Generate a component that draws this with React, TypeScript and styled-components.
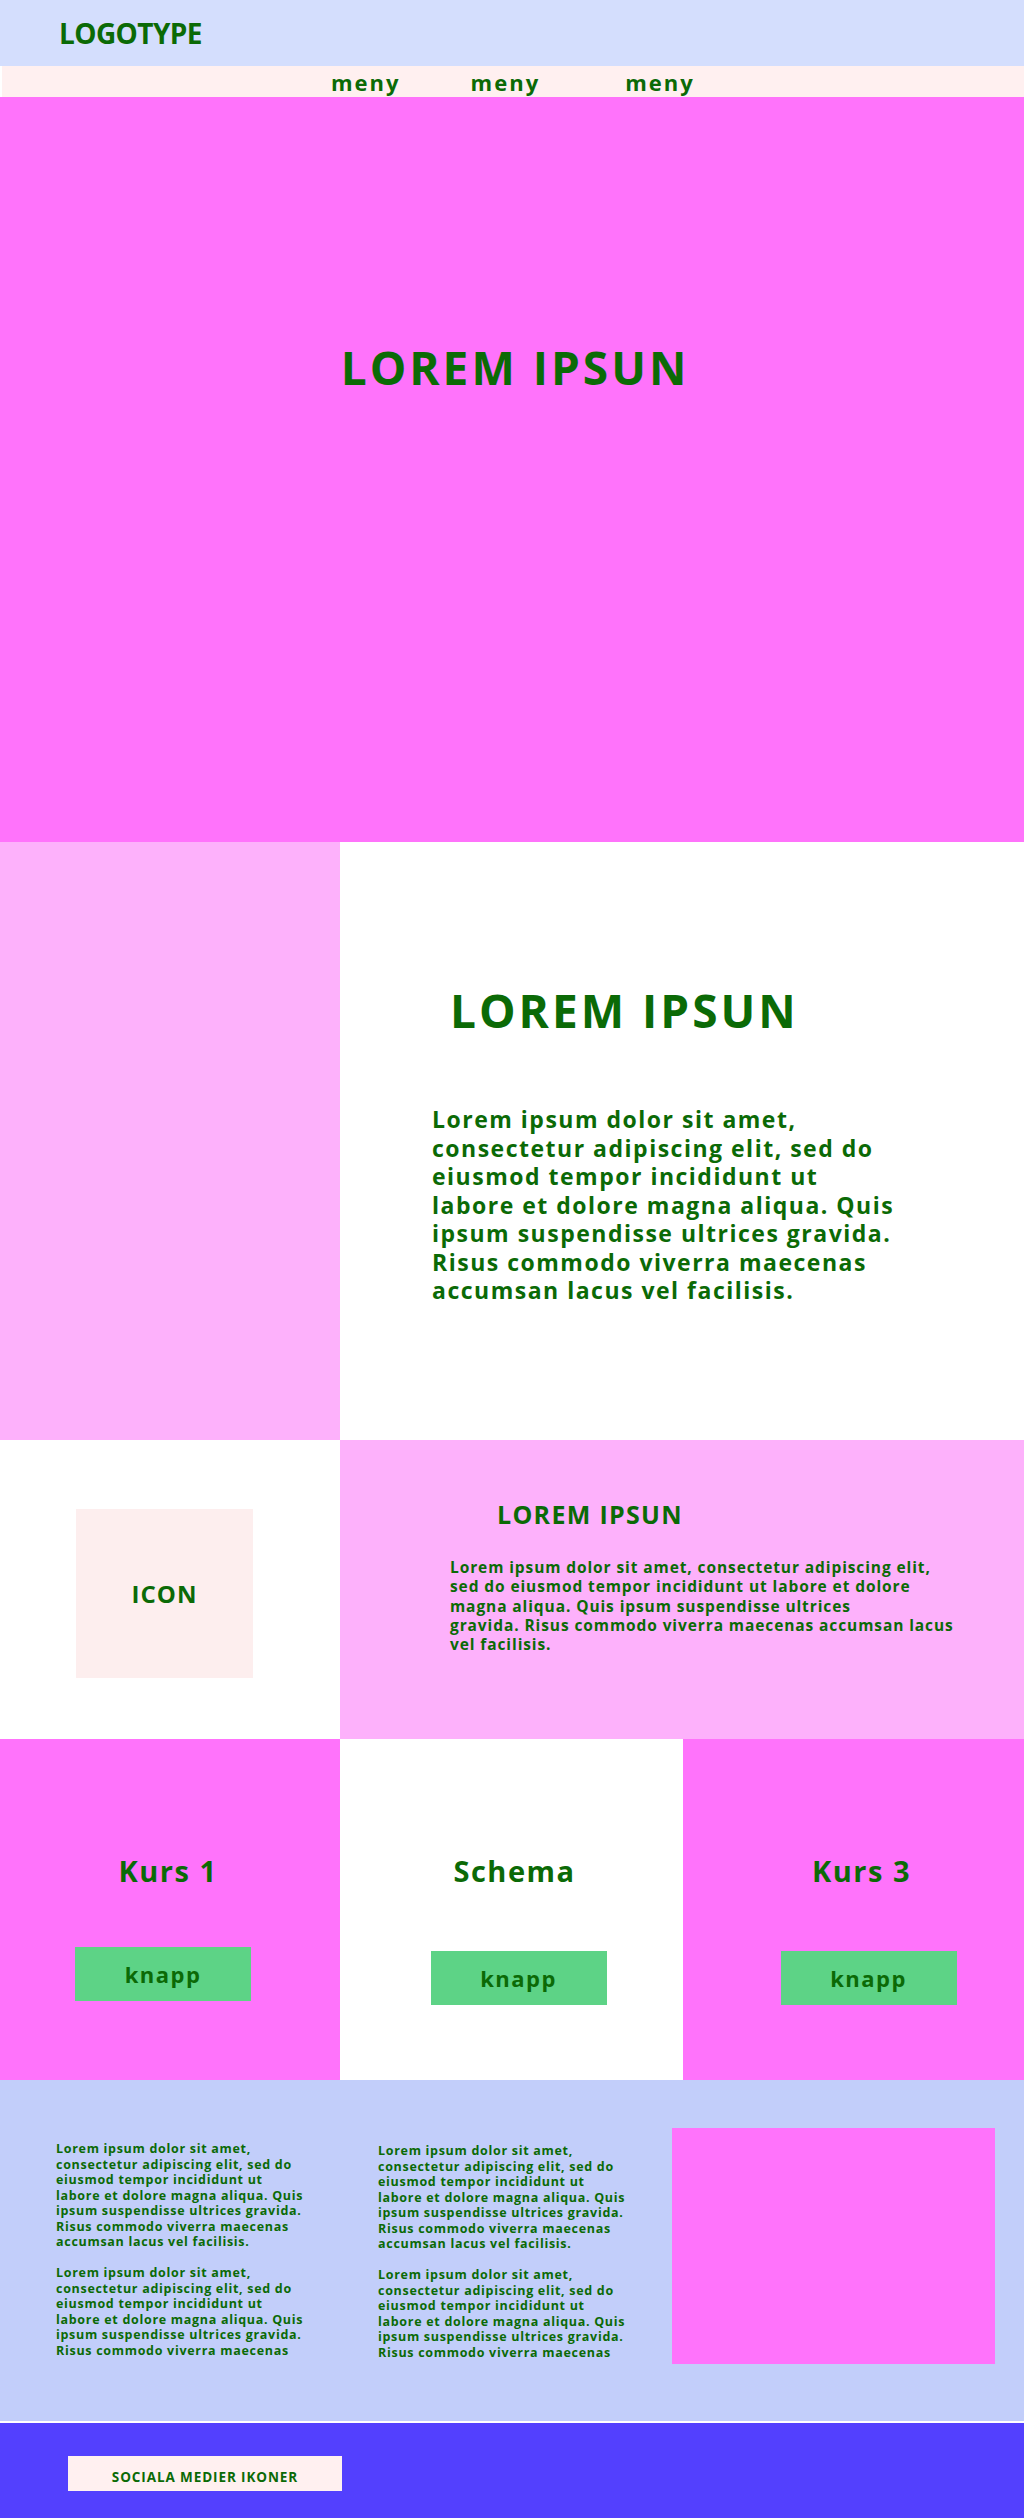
import React from "react";
import styled, { createGlobalStyle } from "styled-components";

const GlobalStyle = createGlobalStyle`
  body {
    margin: 0;
    font-family: "Open Sans", "Liberation Sans", sans-serif;
    color: #0b6a06;
  }
`;

const loremLines = [
  "Lorem ipsum dolor sit amet,",
  "consectetur adipiscing elit, sed do",
  "eiusmod tempor incididunt ut",
  "labore et dolore magna aliqua. Quis",
  "ipsum suspendisse ultrices gravida.",
  "Risus commodo viverra maecenas",
  "accumsan lacus vel facilisis.",
];

// the second block in the info columns stops one line short
const loremCut = loremLines.slice(0, 6);

const featureLines = [
  "Lorem ipsum dolor sit amet, consectetur adipiscing elit,",
  "sed do eiusmod tempor incididunt ut labore et dolore",
  "magna aliqua. Quis ipsum suspendisse ultrices",
  "gravida. Risus commodo viverra maecenas accumsan lacus",
  "vel facilisis.",
];

const menus = [
  { label: "meny", offset: 0 },
  { label: "meny", offset: 0 },
  { label: "meny", offset: 15 },
];

const courses = [
  { title: "Kurs 1", tone: "#ff73fb", titleShift: -2, btnShift: -7, btnTop: 0 },
  { title: "Schema", tone: "#ffffff", titleShift: 3, btnShift: 7, btnTop: 4 },
  { title: "Kurs 3", tone: "#ff73fb", titleShift: 8, btnShift: 15, btnTop: 4 },
];

function Lines({ lines }: { lines: string[] }) {
  return (
    <>
      {lines.map((line, i) => (
        <React.Fragment key={i}>
          {line}
          {i < lines.length - 1 && <br />}
        </React.Fragment>
      ))}
    </>
  );
}

export default function App() {
  return (
    <>
      <GlobalStyle />
      <Page>
        <Header>
          <Logo>LOGOTYPE</Logo>
        </Header>

        <Nav>
          {menus.map((m, i) => (
            <NavItem key={i} $offset={m.offset}>
              {m.label}
            </NavItem>
          ))}
        </Nav>

        <Hero>
          <HeroTitle>LOREM IPSUN</HeroTitle>
        </Hero>

        <IntroRow>
          <PinkPanel />
          <IntroText>
            <IntroTitle>LOREM IPSUN</IntroTitle>
            <IntroParagraph>
              <Lines lines={loremLines} />
            </IntroParagraph>
          </IntroText>
        </IntroRow>

        <FeatureRow>
          <IconCell>
            <IconBox>ICON</IconBox>
          </IconCell>
          <FeatureText>
            <FeatureTitle>LOREM IPSUN</FeatureTitle>
            <FeatureParagraph>
              <Lines lines={featureLines} />
            </FeatureParagraph>
          </FeatureText>
        </FeatureRow>

        <CourseRow>
          {courses.map((c) => (
            <CourseCard key={c.title} $tone={c.tone}>
              <CourseTitle $shift={c.titleShift}>{c.title}</CourseTitle>
              <CourseButton $shift={c.btnShift} $top={c.btnTop}>
                knapp
              </CourseButton>
            </CourseCard>
          ))}
        </CourseRow>

        <InfoRow>
          <InfoColumn $top={0}>
            <InfoParagraph>
              <Lines lines={loremLines} />
            </InfoParagraph>
            <InfoParagraph>
              <Lines lines={loremCut} />
            </InfoParagraph>
          </InfoColumn>
          <InfoColumn $top={2}>
            <InfoParagraph>
              <Lines lines={loremLines} />
            </InfoParagraph>
            <InfoParagraph>
              <Lines lines={loremCut} />
            </InfoParagraph>
          </InfoColumn>
          <InfoImage />
        </InfoRow>

        <Footer>
          <SocialBox>SOCIALA MEDIER IKONER</SocialBox>
        </Footer>
      </Page>
    </>
  );
}

const Page = styled.div`
  width: 1024px;
  display: flex;
  flex-direction: column;
`;

const Header = styled.header`
  height: 66px;
  padding-left: 59px;
  display: flex;
  align-items: center;
  background-color: #d4defd;
`;

const Logo = styled.div`
  font-size: 28px;
  font-weight: 700;
  letter-spacing: -0.6px;
  line-height: 1;
`;

const Nav = styled.nav`
  height: 31px;
  margin-left: 2px;
  padding-left: 329px;
  display: flex;
  align-items: center;
  gap: 70px;
  background-color: #fff0f0;
`;

const NavItem = styled.div<{ $offset: number }>`
  margin-left: ${({ $offset }) => $offset}px;
  font-size: 22px;
  font-weight: 700;
  letter-spacing: 2px;
  line-height: 1;
`;

const Hero = styled.section`
  height: 745px;
  padding-top: 247px;
  box-sizing: border-box;
  display: flex;
  justify-content: center;
  background-color: #ff73fb;
`;

const HeroTitle = styled.h1`
  margin: 0 0 0 6px;
  font-size: 46px;
  font-weight: 700;
  letter-spacing: 3px;
  line-height: 1;
`;

const IntroRow = styled.section`
  height: 598px;
  display: flex;
  background-color: #ffffff;
`;

const PinkPanel = styled.div`
  width: 340px;
  background-color: #fdb1fb;
`;

const IntroText = styled.div`
  flex: 1;
  padding: 145px 0 0 92px;
  display: flex;
  flex-direction: column;
`;

const IntroTitle = styled.h2`
  margin: 0 0 72px 18px;
  font-size: 46px;
  font-weight: 700;
  letter-spacing: 3px;
  line-height: 1;
`;

const IntroParagraph = styled.p`
  margin: 0;
  font-size: 23px;
  font-weight: 700;
  letter-spacing: 1.5px;
  line-height: 28.5px;
  white-space: nowrap;
`;

const FeatureRow = styled.section`
  height: 299px;
  display: flex;
`;

const IconCell = styled.div`
  width: 340px;
  padding: 69px 0 0 76px;
  box-sizing: border-box;
  background-color: #ffffff;
`;

const IconBox = styled.div`
  width: 177px;
  height: 169px;
  display: flex;
  align-items: center;
  justify-content: center;
  background-color: #fdeeee;
  font-size: 24px;
  font-weight: 700;
  letter-spacing: 1px;
`;

const FeatureText = styled.div`
  flex: 1;
  padding: 62px 0 0 110px;
  display: flex;
  flex-direction: column;
  background-color: #fdb1fb;
`;

const FeatureTitle = styled.h3`
  margin: 0 0 31px 47px;
  font-size: 25px;
  font-weight: 700;
  letter-spacing: 1.3px;
  line-height: 1;
`;

const FeatureParagraph = styled.p`
  margin: 0;
  font-size: 15.5px;
  font-weight: 700;
  letter-spacing: 0.9px;
  line-height: 19.3px;
  white-space: nowrap;
`;

const CourseRow = styled.section`
  height: 341px;
  display: grid;
  grid-template-columns: 340px 343px 1fr;
`;

const CourseCard = styled.div<{ $tone: string }>`
  padding-top: 117px;
  display: flex;
  flex-direction: column;
  align-items: center;
  background-color: ${({ $tone }) => $tone};
`;

const CourseTitle = styled.div<{ $shift: number }>`
  margin-left: ${({ $shift }) => $shift * 2}px;
  font-size: 29px;
  font-weight: 700;
  letter-spacing: 1.5px;
  line-height: 1;
`;

const CourseButton = styled.button<{ $top: number; $shift: number }>`
  width: 176px;
  height: 54px;
  margin-top: ${({ $top }) => 62 + $top}px;
  margin-left: ${({ $shift }) => $shift * 2}px;
  border: none;
  background-color: #5dd386;
  color: #0b6a06;
  font-family: inherit;
  font-size: 22px;
  font-weight: 700;
  letter-spacing: 1.5px;
  cursor: pointer;
`;

const InfoRow = styled.section`
  height: 343px;
  padding: 48px 0 0 56px;
  box-sizing: border-box;
  display: flex;
  align-items: flex-start;
  background-color: #c2cefa;
  border-bottom: 2px solid #ffffff;
`;

const InfoColumn = styled.div<{ $top: number }>`
  width: 262px;
  margin-top: ${({ $top }) => 13 + $top}px;
  margin-right: 60px;
`;

const InfoParagraph = styled.p`
  margin: 0 0 15.5px;
  font-size: 12.5px;
  font-weight: 700;
  letter-spacing: 0.7px;
  line-height: 15.5px;
  white-space: nowrap;
`;

const InfoImage = styled.div`
  width: 323px;
  height: 236px;
  margin-left: -28px;
  background-color: #ff73fb;
`;

const Footer = styled.footer`
  height: 95px;
  padding: 33px 0 0 68px;
  box-sizing: border-box;
  background-color: #5340fe;
`;

const SocialBox = styled.div`
  width: 274px;
  height: 35px;
  padding-top: 6px;
  box-sizing: border-box;
  display: flex;
  align-items: center;
  justify-content: center;
  background-color: #fff0f0;
  font-size: 13.5px;
  font-weight: 700;
  letter-spacing: 0.9px;
`;
